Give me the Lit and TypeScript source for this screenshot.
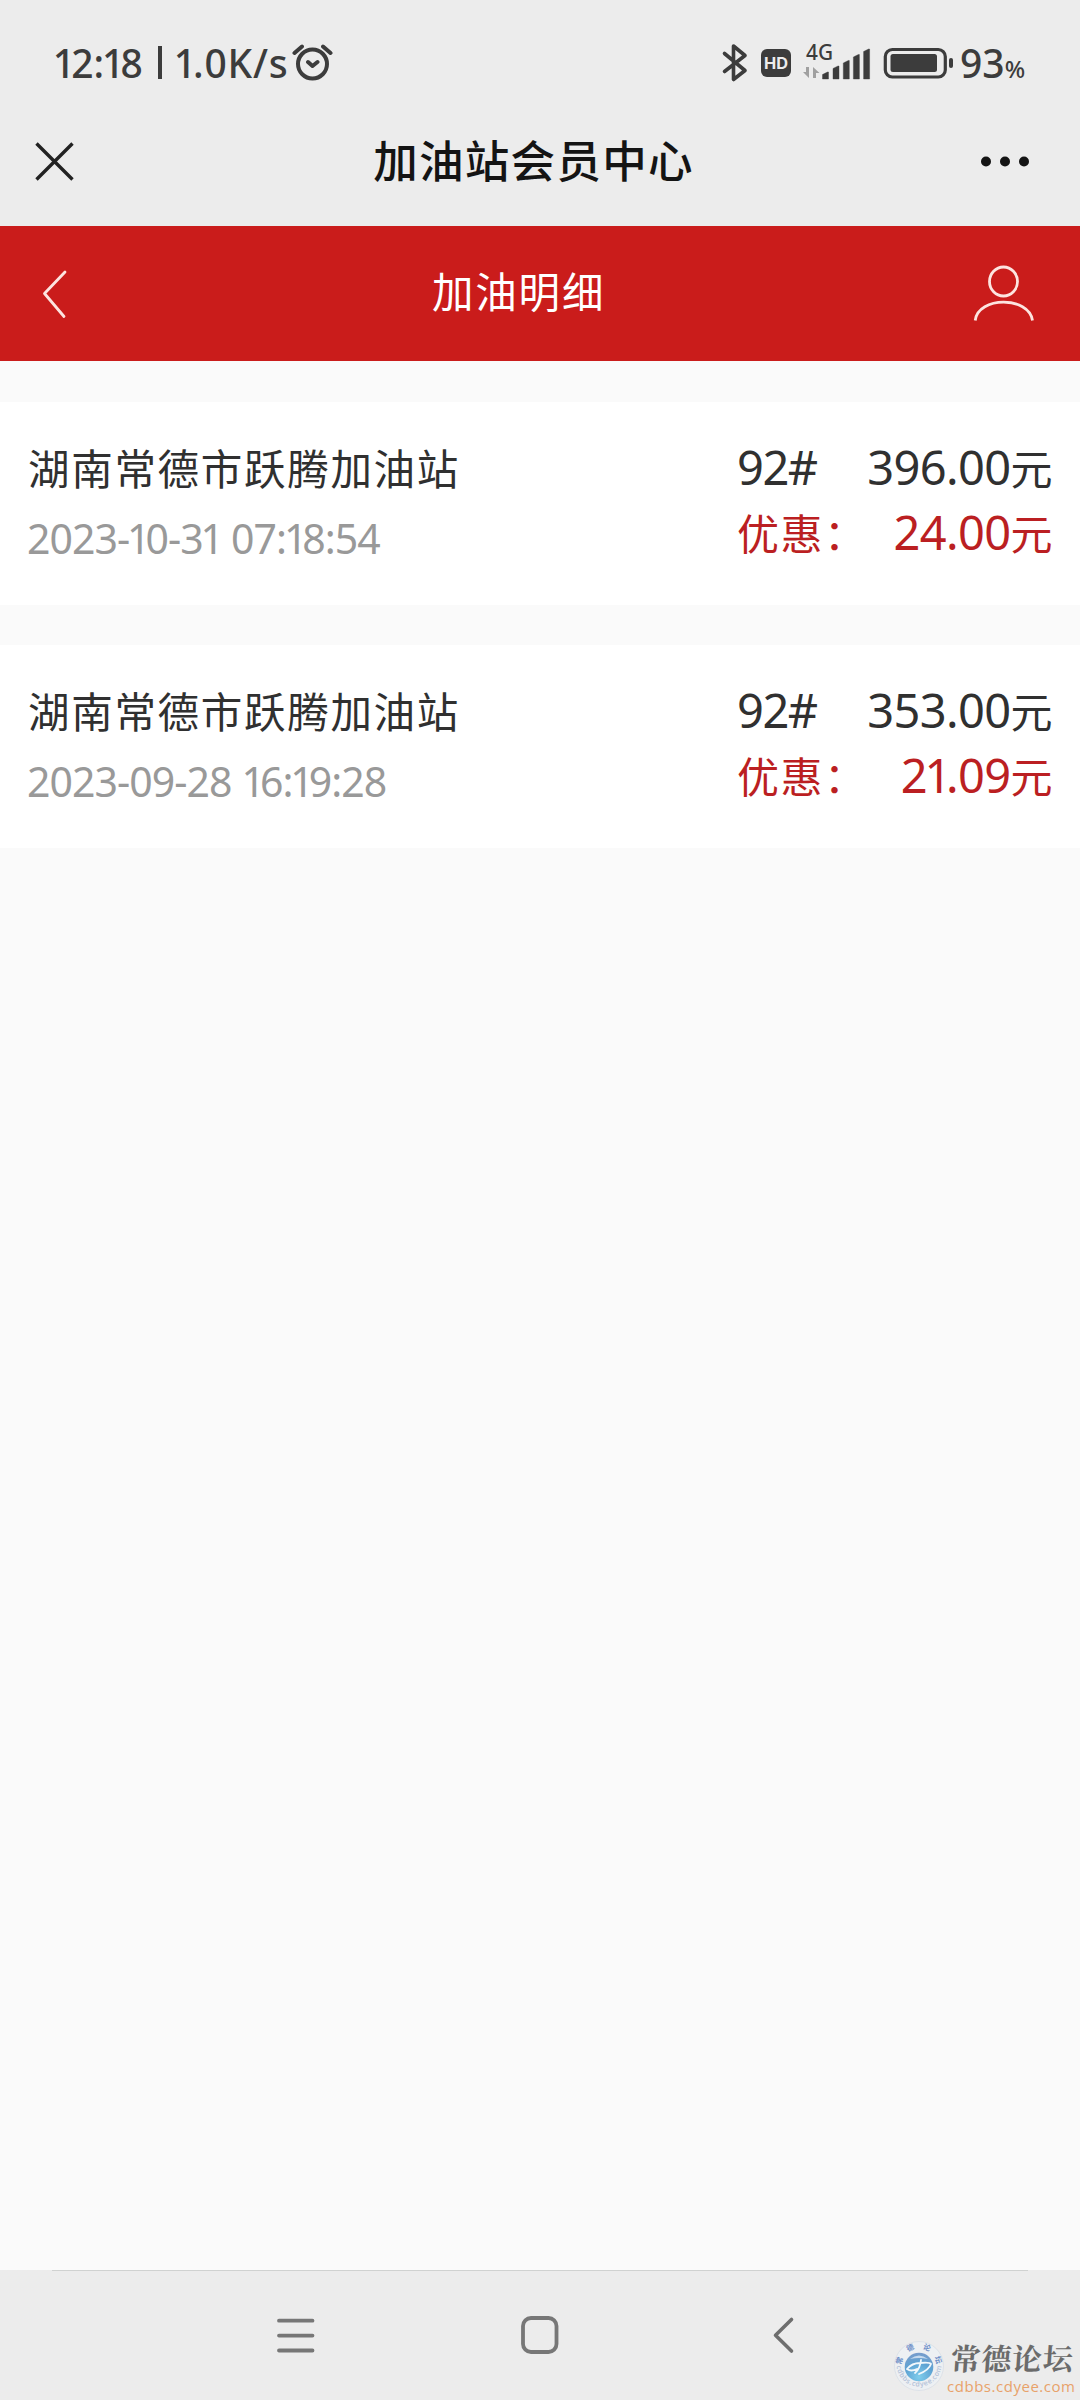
import { LitElement, html, css, svg } from "lit";
import { customElement, property } from "lit/decorators.js";

interface FuelRecord {
  station: string;
  time: string;
  grade: string;
  amount: string;
  discount: string;
}

const RECORDS: FuelRecord[] = [
  { station: "湖南常德市跃腾加油站", time: "2023-10-31 07:18:54", grade: "92#", amount: "396.00", discount: "24.00" },
  { station: "湖南常德市跃腾加油站", time: "2023-09-28 16:19:28", grade: "92#", amount: "353.00", discount: "21.09" },
];

/* The digit 1 is set tighter than the other figures. */
const figures = (text: string) =>
  text.split(/(1)/).map((part) => (part === "1" ? html`<span class="one">1</span>` : part));

const figureStyles = css`
  .one { margin: 0 -0.1em 0 -0.055em; }
`;

@customElement("status-bar")
class StatusBar extends LitElement {
  static styles = [
    figureStyles,
    css`
      :host { display: flex; height: 126px; box-sizing: border-box; padding: 0 0 0 55px; justify-content: space-between; color: #3c3c3c; font-weight: 500; }
      .side { display: flex; }
      .right { width: 360px; }
      .txt { flex: none; font-size: 39px; line-height: 60px; margin-top: 32.500px; white-space: nowrap; }
      .clock { width: 103px; }
      .bar { flex: none; width: 4px; height: 33px; margin: 46px 14px 0 0; background: #3c3c3c; }
      .speed { width: 116px; letter-spacing: 0.8px; }
      .alarm { margin-top: 44px; }
      .pct { font-size: 24px; }
      svg { display: block; flex: none; }
      .hd { font: 700 15.5px Inter, sans-serif; fill: #ececec; }
      .net { font: 500 21px "Noto Sans", sans-serif; fill: #3c3c3c; }
    `,
  ];
  render() {
    return html`
      <div class="side">
        <span class="txt clock">${figures("12:18")}</span><i class="bar"></i><span class="txt speed">${figures("1.0K/s")}</span>
        <svg class="alarm" width="42" height="38" viewBox="292 44 42 38" fill="none" stroke="#3c3c3c" stroke-width="4" stroke-linecap="round" stroke-linejoin="round">
          <circle cx="312.5" cy="64" r="14.5" />
          <path d="M294.5 53 302 46.500M323 46.500 330.500 53M308 62 312.500 66 317.500 62" />
        </svg>
      </div>
      <div class="side right">
        <svg width="240" height="84" viewBox="720 0 240 84">
          <path d="M724.500 53.500 745 70.500 733.500 79.500V46L745 55.500 724.500 71.500" fill="none" stroke="#3c3c3c" stroke-width="3.6" stroke-linecap="round" stroke-linejoin="round" />
          <rect x="761" y="49" width="30" height="28" rx="6" fill="#3c3c3c" />
          <text class="hd" x="764" y="68.500" textLength="24" lengthAdjust="spacingAndGlyphs">HD</text>
          <text class="net" x="806" y="59.500" textLength="27" lengthAdjust="spacingAndGlyphs">4G</text>
          <path d="M806 67H809V78L803 72H806ZM813 78V67L819.500 73H816V78Z" fill="#a0a0a0" />
          ${[[822.5, 73], [833, 67], [843.3, 61.5], [853.4, 55.5], [863.6, 50]].map(
            ([x, y]) => svg`<path d=${`M${x} ${y + 1.5}l5-2.500h1V79h-6Z`} fill="#3c3c3c" stroke="#3c3c3c" stroke-width=".4" />`
          )}
          <rect x="885.300" y="49.500" width="60" height="27.500" rx="7" fill="none" stroke="#3c3c3c" stroke-width="3.200" />
          <rect x="890.500" y="54" width="46.500" height="18" rx="2.500" fill="#3c3c3c" />
          <rect x="949" y="58" width="4" height="10" rx="2" fill="#3c3c3c" />
        </svg>
        <span class="txt">93<span class="pct">%</span></span>
      </div>`;
  }
}

@customElement("title-bar")
class TitleBar extends LitElement {
  @property() heading = "";
  static styles = css`
    :host { display: flex; height: 100px; box-sizing: border-box; padding: 0 46px 0 33px; justify-content: space-between; align-items: flex-start; color: #141414; }
    svg { display: block; margin-top: 14px; }
    h1 { margin: 5px 0 0 12px; font-size: 44.5px; font-weight: 500; line-height: 60px; letter-spacing: 1.3px; }
  `;
  render() {
    return html`
      <svg width="44" height="44" viewBox="33 140 44 44" fill="none" stroke="#222" stroke-width="3.400"><path d="M36.500 143.500 72.500 179.500M72.500 143.500 36.500 179.500" /></svg>
      <h1>${this.heading}</h1>
      <svg width="56" height="44" viewBox="978 140 56 44" fill="#141414"><circle cx="986" cy="161.500" r="5" /><circle cx="1005" cy="161.500" r="5" /><circle cx="1024" cy="161.500" r="5" /></svg>`;
  }
}

@customElement("page-header")
class PageHeader extends LitElement {
  @property() heading = "";
  static styles = css`
    :host { display: grid; grid-template-columns: 432px 1fr 110px; height: 135px; background: #ca1c1b; color: #fff; }
    svg { display: block; }
    h2 { margin: 36px 0 0; font-size: 41.500px; font-weight: 400; line-height: 60px; letter-spacing: 1.800px; }
  `;
  render() {
    return html`
      <svg width="100" height="135" viewBox="0 226 100 135" fill="none" stroke="#fde4e0" stroke-width="2.800" stroke-linecap="round" stroke-linejoin="round"><path d="M65 272 44.500 293.500 64 316.500" /></svg>
      <h2>${this.heading}</h2>
      <svg width="110" height="135" viewBox="970 226 110 135" fill="none" stroke="#fde4e0" stroke-width="2.800"><ellipse cx="1003.500" cy="281.500" rx="14" ry="14.500" /><path d="M975.200 320.500C978 296 1029 296 1032.500 320.500" /></svg>`;
  }
}

@customElement("fuel-record")
class FuelRecordCard extends LitElement {
  @property({ attribute: false }) record!: FuelRecord;
  static styles = [
    figureStyles,
    css`
      :host { display: flex; justify-content: space-between; height: 203px; box-sizing: border-box; padding: 0 28px 0 28px; background: #fff; color: #303030; white-space: nowrap; }
      .place { padding-top: 37px; }
      .station { font-size: 41.500px; line-height: 60px; letter-spacing: 1.700px; }
      .time { margin: 9px 0 0 -1px; font-size: 41px; line-height: 60px; color: #999; letter-spacing: -0.95px; word-spacing: 2.500px; }
      .sums { width: 315px; padding-top: 33px; font-size: 47px; line-height: 65px; letter-spacing: -0.6px; }
      .line { display: flex; justify-content: space-between; height: 65px; }
      .grade { letter-spacing: -1.500px; }
      .cjk { font-size: 42px; }
      .label { letter-spacing: 1.500px; }
      .off { color: #bb1f22; }
    `,
  ];
  render() {
    const r = this.record;
    return html`
      <div class="place">
        <div class="station">${r.station}</div>
        <div class="time">${figures(r.time)}</div>
      </div>
      <div class="sums">
        <div class="line"><span class="grade">${r.grade}</span><span>${figures(r.amount)}<span class="cjk">元</span></span></div>
        <div class="line off"><span><span class="cjk label">优惠：</span></span><span>${figures(r.discount)}<span class="cjk">元</span></span></div>
      </div>`;
  }
}

@customElement("nav-keys")
class NavKeys extends LitElement {
  static styles = css`
    :host { display: block; height: 130px; background: #ececec; }
    .rule { height: 1px; margin: 0 52px; background: #d0d2d1; }
    .keys { display: flex; padding: 39px 0 0 271px; gap: 194px; }
    svg { display: block; }
  `;
  render() {
    return html`
      <div class="rule"></div>
      <div class="keys">
        <svg width="50" height="50" viewBox="271 2310 50 50" stroke="#777" stroke-width="3.800" stroke-linecap="round"><path d="M279 2320.700H312.500M279 2335.600H312.500M279 2350.500H312.500" /></svg>
        <svg width="50" height="50" viewBox="515 2310 50 50" fill="none" stroke="#777" stroke-width="3.800"><rect x="523" y="2318" width="33.500" height="34" rx="8" /></svg>
        <svg width="50" height="50" viewBox="759 2310 50 50" fill="none" stroke="#6e6e6e" stroke-width="3.600" stroke-linecap="round" stroke-linejoin="round"><path d="M791.500 2319.500 775.500 2335.300 791.500 2351" /></svg>
      </div>`;
  }
}

@customElement("forum-mark")
class ForumMark extends LitElement {
  static styles = css`
    :host { display: block; width: 190px; height: 80px; }
    svg { display: block; overflow: visible; }
    .name { font: 700 30px "Noto Serif CJK SC", "AR PL UKai CN", "Noto Sans CJK SC", serif; fill: #6b6b6b; }
    .url { font: 400 15px "Open Sans", sans-serif; fill: #e8a26a; }
    .arc { font: 700 7.500px "Noto Sans CJK SC", sans-serif; fill: #6f8fc8; }
    .ring { font: 600 7px "Open Sans", sans-serif; fill: #b4c2d8; }
  `;
  render() {
    return html`
      <svg width="190" height="80" viewBox="890 2320 190 80">
        <defs>
          <radialGradient id="ball" cx=".5" cy=".85" r=".9"><stop offset="0" stop-color="#7fcdec" /><stop offset=".55" stop-color="#5ea3d3" /><stop offset="1" stop-color="#7d9cca" /></radialGradient>
          <path id="top" d="M901.500 2366A17.500 17.500 0 0 1 936.500 2366" />
          <path id="bottom" d="M896.500 2364A22.500 22.500 0 0 0 941.500 2364" />
        </defs>
        <circle cx="919" cy="2366" r="24.500" fill="#edf0f3" stroke="#dde2e8" />
        <circle cx="919" cy="2367" r="14.300" fill="url(#ball)" />
        <path d="M910 2359Q919 2352 928 2359Q919 2357 910 2359Z" fill="#c7daee" />
        <path d="M921 2360Q920 2369 915 2373M907 2369Q912 2363 920 2363Q930 2362 931 2364Q929 2370 919 2374M907 2369Q911 2372 917 2369" fill="none" stroke="#f2f8fc" stroke-width="1.800" stroke-linecap="round" />
        <text class="arc"><textPath href="#top" startOffset="1" textLength="52">常德论坛</textPath></text>
        <text class="ring"><textPath href="#bottom" startOffset="2" textLength="66">cdbbs.cdyee.com</textPath></text>
        <text class="name" transform="translate(950 2370) skewX(-4)" textLength="122">常德论坛</text>
        <text class="url" x="947" y="2391.500" textLength="128">cdbbs.cdyee.com</text>
      </svg>`;
  }
}

@customElement("app-root")
class AppRoot extends LitElement {
  static styles = css`
    :host { display: flex; flex-direction: column; position: relative; width: 1080px; height: 2400px; overflow: hidden; background: #fafafa; font-family: "Noto Sans", "Noto Sans CJK SC", sans-serif; }
    .top { background: #ececec; }
    .list { flex: 1; display: flex; flex-direction: column; gap: 40px; padding-top: 41px; }
    .mark { position: absolute; right: 0; bottom: 0; }
  `;
  render() {
    return html`
      <div class="top">
        <status-bar></status-bar>
        <title-bar heading="加油站会员中心"></title-bar>
      </div>
      <page-header heading="加油明细"></page-header>
      <div class="list">${RECORDS.map((r) => html`<fuel-record .record=${r}></fuel-record>`)}</div>
      <nav-keys></nav-keys>
      <forum-mark class="mark"></forum-mark>`;
  }
}
